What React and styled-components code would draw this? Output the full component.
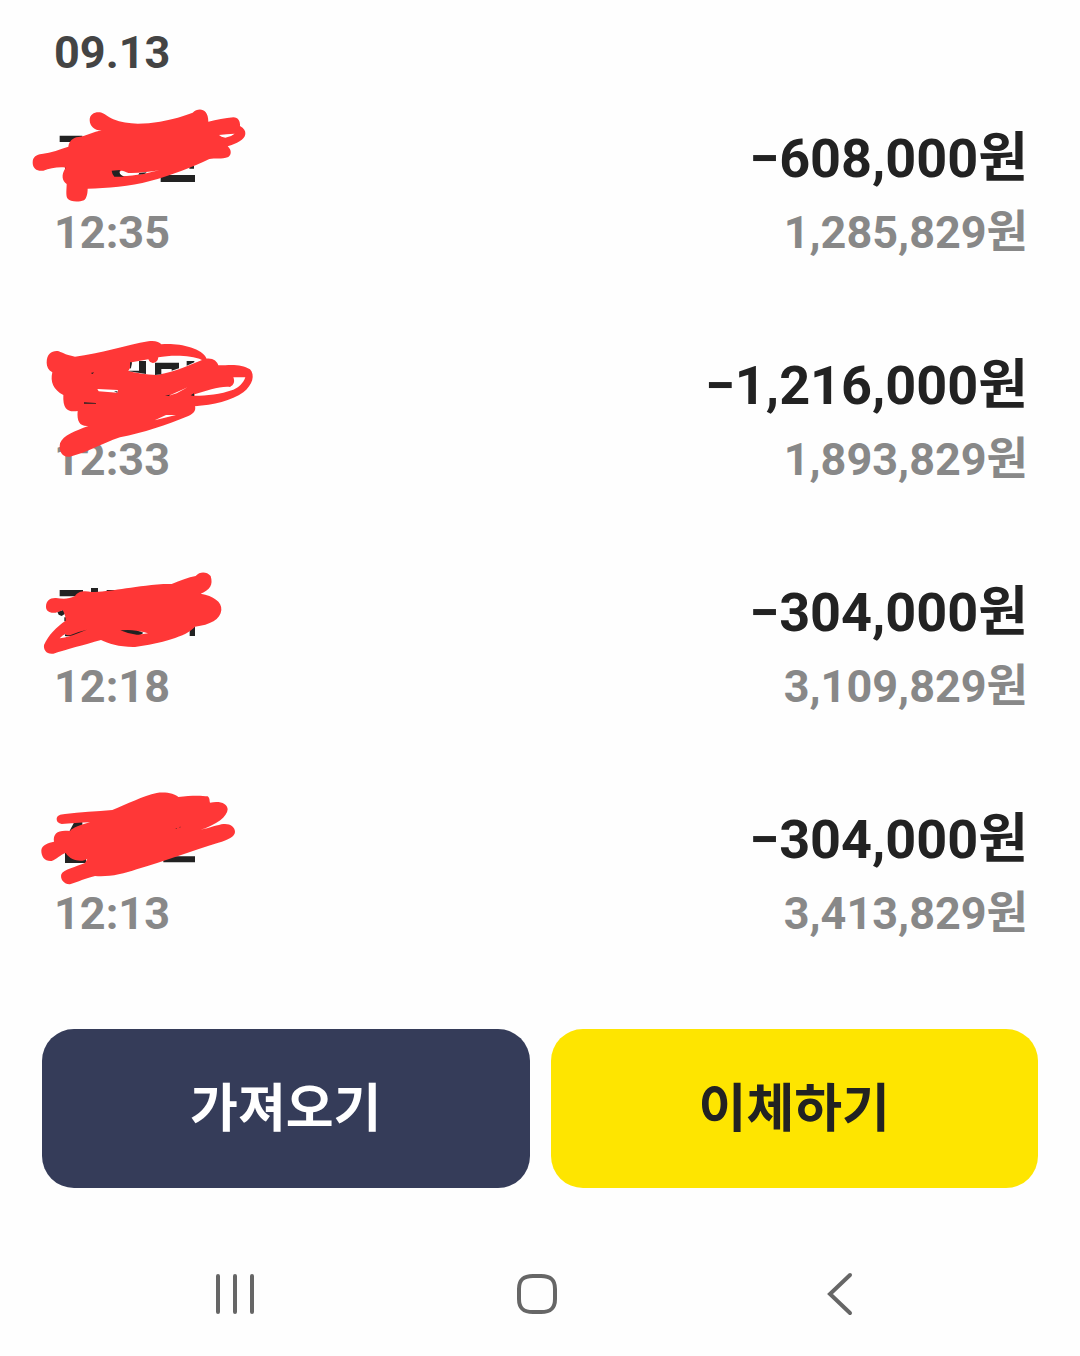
import React from 'react';
import styled, { createGlobalStyle } from 'styled-components';

const GlobalStyle = createGlobalStyle`
  * {
    box-sizing: border-box;
  }

  body {
    margin: 0;
    background: #fefefe;
    color: #222222;
    font-family: Roboto, 'Noto Sans CJK KR', sans-serif;
    font-weight: 700;
  }
`;

const Screen = styled.div`
  display: flex;
  flex-direction: column;
  min-height: 100vh;
`;

const History = styled.main`
  flex: 1;
  padding: 16px 52px 58px 54px;
`;

const DateHeading = styled.h2`
  margin: 0 0 32px;
  color: #444444;
  font-size: 45px;
  line-height: 74px;
`;

const List = styled.ul`
  display: flex;
  flex-direction: column;
  gap: 79px;
  margin: 0;
  padding: 0;
  list-style: none;
`;

const Row = styled.li`
  position: relative;
  display: flex;
  align-items: flex-end;
  justify-content: space-between;
`;

const Figures = styled.div`
  text-align: right;
`;

const Amount = styled.div`
  font-size: 54px;
  line-height: 74px;
`;

const Detail = styled.div`
  color: #888888;
  font-size: 45px;
  line-height: 74px;
`;

/* the marker lies over the name and can run into the time below it */
const Marker = styled.svg`
  position: absolute;
  top: -22px;
  left: -34px;
  width: 260px;
  height: 160px;
  overflow: visible;
`;

const Actions = styled.div`
  display: grid;
  grid-template-columns: 1fr 1fr;
  gap: 21px;
  padding: 0 42px;
`;

const ActionButton = styled.button`
  height: 159px;
  padding: 0 0 8px;
  border: 0;
  border-radius: 32px;
  background: ${props => (props.$primary ? '#fee500' : '#353c59')};
  color: ${props => (props.$primary ? '#222222' : '#ffffff')};
  font: inherit;
  font-size: 52px;
  cursor: pointer;
`;

const SystemBar = styled.nav`
  display: grid;
  grid-template-columns: repeat(3, 1fr);
  padding: 44px 90px 0 84px;
  height: 168px;
`;

const SystemButton = styled.button`
  display: flex;
  align-items: center;
  justify-content: center;
  height: 124px;
  padding: 0;
  border: 0;
  background: none;
  color: #666666;
  cursor: pointer;

  svg {
    width: 48px;
    height: 48px;
    fill: none;
    stroke: currentColor;
    stroke-width: 4;
    stroke-linecap: round;
  }
`;

const INK = '#222222';
const RED = '#ff3737';

const transactions = [
  {
    time: '12:35',
    amount: '−608,000원',
    balance: '1,285,829원',
    top: 240,
    under: 'M119 347h68v19h-68z M422 465h103v21H422z M135 441h12v7h-12z M508 438h14v8h-14z',
    stroke:
      'M38 428C38 410 50 404 65 402C95 398 120 388 145 380C147 365 158 352 175 351C200 348 220 336 245 331C225 332 209 320 209 300C209 282 225 275 240 277C255 281 262 290 280 298C320 315 370 313 420 305C460 298 490 288 518 278C535 262 565 264 565 305C590 300 615 294 640 292C655 292 661 305 660 318C672 324 677 333 676 342C674 360 650 370 623 379C636 390 634 405 625 411C605 418 585 414 568 417C520 440 450 468 390 483C330 500 260 505 203 506C203 520 200 535 192 541C175 547 150 546 142 535C137 525 140 505 140 492C127 482 122 465 137 443C115 440 90 445 70 452C52 455 38 445 38 428Z',
    gaps: 'M597 345Q620 342 644 341Q634 350 616 353Q603 352 597 345Z M297 458C303 448 310 452 325 459C360 460 390 455 418 451C370 462 340 468 320 468C305 468 297 465 297 458Z',
    over: 'M275 452L300 450Q294 462 312 470H283Q276 462 275 452Z M358 459L380 457 375 461 355 464Z',
  },
  {
    time: '12:33',
    amount: '−1,216,000원',
    balance: '1,893,829원',
    top: -9,
    under: 'M512 222h13v12h-13z',
    stroke:
      'M80 98C80 72 95 62 112 63C125 65 132 74 165 80C240 72 320 45 385 34C405 31 418 36 424 43C465 38 545 50 560 86C580 84 592 95 595 106C640 104 665 102 690 118C706 135 698 165 670 187C635 212 580 225 525 229C528 240 523 250 505 258C440 285 370 308 300 322C240 342 210 365 150 380C125 384 116 362 120 340C130 315 165 303 205 288C180 290 170 275 173 243C145 247 128 240 130 195C100 180 90 155 97 127C85 120 80 110 80 98Z',
    gaps: 'M335 97L385 88C390 102 405 102 413 90L415 82C450 76 510 74 546 90C520 100 470 125 410 135C380 133 340 128 325 122C333 112 335 105 335 97Z M524 193C560 182 600 168 630 171C642 165 645 155 640 142L676 142C670 160 655 173 640 179C600 193 560 197 524 197Z M232 177L294 180 292 188 236 184Z M446 197L503 172 470 190Z M404 271L438 255 468 255Z',
    over: 'M357 93H378V132L328 124V122H357Z M330 97H336L333 114 330 116Z M405 98H477V115L455 122V117H424V133L405 135Z M500 93H523V97L500 107Z M192 217L228 219V221H192Z M435 197L450 194 447 198Z M512 196L522 190V198Z M212 129L222 127 218 132Z M282 184L292 184V188Z',
  },
  {
    time: '12:18',
    amount: '−304,000원',
    balance: '3,109,829원',
    top: -18,
    under: 'M119 90h70v19h-70z M213 84h21v18h-21z M260 90h50v12h-50z M112 155L137 148 134 162 125 168 116 164Z M509 195h16v33h-16z M133 172h8v12h-8z',
    stroke:
      'M78 140C78 122 90 113 108 114C130 117 145 118 165 108C175 92 195 92 215 96C270 96 330 80 430 72L455 72C480 62 505 52 527 48C540 34 560 35 572 48C580 75 570 90 542 101C580 108 606 125 604 150C602 178 570 195 525 200C500 230 420 250 345 261C300 262 265 250 243 240C190 255 140 268 100 281C80 284 70 270 72 255C85 225 110 200 137 182C138 172 133 160 128 150C115 156 105 160 95 158C82 155 78 148 78 140Z',
    gaps: 'M119 235Q128 224 137 221L138 227 150 228Q134 233 119 235Z M355 214Q372 216 384 220L365 223Z',
    over: 'M135 222Q142 228 154 224Q175 215 200 209Q180 217 158 226Q144 230 135 228Z M301 211Q345 207 370 218Q365 224 350 224Q325 222 301 211Z',
  },
  {
    time: '12:13',
    amount: '−304,000원',
    balance: '3,413,829원',
    top: 3,
    under: 'M163 126h24v14l-40 16z M135 217h63v32h-63z M430 229h95v18h-95z',
    stroke:
      'M110 118C110 107 120 103 135 102C180 97 230 94 277 90C320 72 370 48 410 39C440 35 465 42 475 51C510 46 545 46 563 49C570 54 568 62 570 68C600 62 622 70 623 88C622 110 590 135 540 150C570 143 595 134 610 132C630 130 645 140 645 156C644 170 625 180 595 188C520 210 430 245 350 268C310 283 260 292 225 288C195 295 175 305 150 313C130 314 120 295 124 283C130 268 170 260 195 249L202 236C190 246 155 246 137 219C120 225 110 238 95 243C75 245 63 230 64 210C66 195 85 188 102 185C98 160 115 148 150 153C160 142 180 135 210 127C180 128 150 131 125 132C115 131 110 125 110 118Z',
    gaps: '',
    over: 'M466 146l5-2-2 3z M478 141l4-1-2 3z',
  },
];

const RedactedName = ({ item }) => (
  <Marker viewBox={`0 ${item.top} 780 480`} aria-hidden="true">
    <path d={item.under} fill={INK} />
    <path d={item.stroke} fill={RED} />
    <path d={item.gaps} fill="#fefefe" />
    <path d={item.over} fill={INK} />
  </Marker>
);

const Transaction = ({ item }) => (
  <Row>
    <Detail as="time">{item.time}</Detail>
    <Figures>
      <Amount>{item.amount}</Amount>
      <Detail>{item.balance}</Detail>
    </Figures>
    <RedactedName item={item} />
  </Row>
);

const App = () => {
  return (
    <>
      <GlobalStyle />
      <Screen>
        <History>
          <DateHeading>09.13</DateHeading>
          <List>
            {transactions.map(item => (
              <Transaction key={item.time} item={item} />
            ))}
          </List>
        </History>

        <Actions>
          <ActionButton type="button">가져오기</ActionButton>
          <ActionButton type="button" $primary>이체하기</ActionButton>
        </Actions>

        <SystemBar>
          <SystemButton type="button" aria-label="최근 앱">
            <svg viewBox="0 0 48 48">
              <path d="M7 6v36M24 6v36M41 6v36" />
            </svg>
          </SystemButton>
          <SystemButton type="button" aria-label="홈">
            <svg viewBox="0 0 48 48">
              <path d="M20 6h8C38 6 42 10 42 19v10C42 38 38 42 28 42h-8C10 42 6 38 6 29V19C6 10 10 6 20 6Z" />
            </svg>
          </SystemButton>
          <SystemButton type="button" aria-label="뒤로">
            <svg viewBox="0 0 48 48">
              <path d="M35 5L15 24l20 19" />
            </svg>
          </SystemButton>
        </SystemBar>
      </Screen>
    </>
  );
};

export default App;
